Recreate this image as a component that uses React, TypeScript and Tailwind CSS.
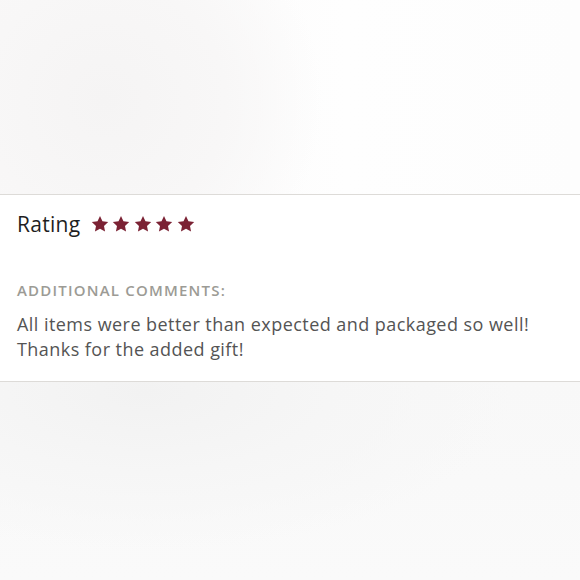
import React from 'react';

const Star = () => (
    <svg viewBox="0 0 24 24" className="w-[18px] h-[18px]" fill="#7b2234">
        <path d="M12 1.3L15.29 8.27 22.94 9.25 17.33 14.53 18.76 22.1 12 18.4 5.24 22.1 6.67 14.53 1.06 9.25 8.71 8.27Z" />
    </svg>
);

const App = () => {
    return (
        <div className="w-[580px] h-[580px] flex flex-col bg-[#fbfbfb] font-['Open_Sans',sans-serif]">
            <div className="h-[194px] bg-[radial-gradient(circle_at_18%_52%,#f5f4f4_0%,#f8f7f7_25%,transparent_45%),linear-gradient(90deg,#faf9f9,#fefefe_60%,#fdfdfd)]" />
            <div className="bg-white border-y border-[#dddbd8] px-[17px] h-[188px]">
                <div className="flex items-center pt-[14px]">
                    <h2 className="text-[21px] tracking-[0.3px] text-[#1f1f1f]">Rating</h2>
                    <div className="flex gap-[3.5px] ml-[10px] -mt-[2px]">
                        <Star />
                        <Star />
                        <Star />
                        <Star />
                        <Star />
                    </div>
                </div>
                <p className="mt-[38px] text-[15px] font-semibold tracking-[1.2px] text-[#9c9b95] uppercase">
                    Additional comments:
                </p>
                <p className="mt-[11px] text-[18px] leading-[25px] tracking-[0.45px] text-[#545454]">
                    All items were better than expected and packaged so well!
                    <br />
                    Thanks for the added gift!
                </p>
            </div>
            <div className="flex-1 bg-[radial-gradient(ellipse_at_25%_5%,#f2f2f2_0%,#f6f6f6_30%,transparent_60%),linear-gradient(180deg,#f8f8f8,#fafafa)]" />
        </div>
    );
};

export default App;
